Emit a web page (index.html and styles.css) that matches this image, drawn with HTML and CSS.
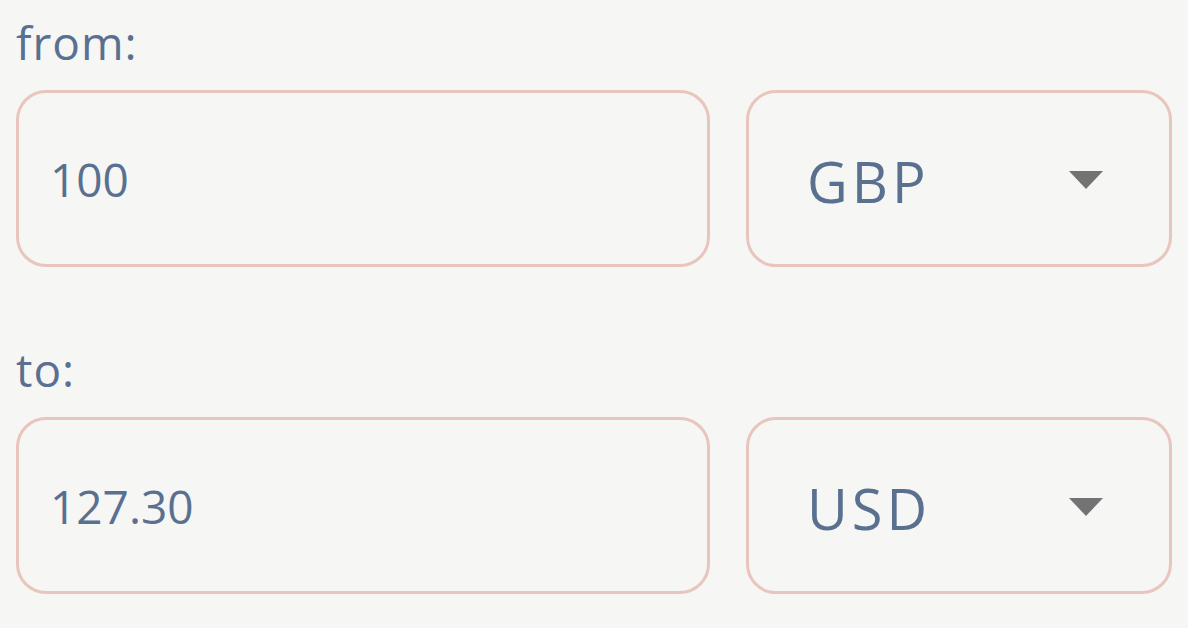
FILE: index.html
```html
<!DOCTYPE html>
<html lang="en">
<head>
<meta charset="utf-8">
<title>Currency converter</title>
<link rel="stylesheet" href="styles.css">
</head>
<body>
<main class="converter">
  <section class="group">
    <label class="label" for="from-amount">from:</label>
    <div class="row">
      <div class="field amount">
        <input id="from-amount" class="amount-input" type="text" value="100">
      </div>
      <div class="field currency">
        <select class="currency-select" aria-label="from currency">
          <option selected>GBP</option>
          <option>USD</option>
          <option>EUR</option>
        </select>
        <svg class="caret" width="34" height="18" viewBox="0 0 34 18" aria-hidden="true"><path d="M0 0 H34 L17 18 Z" fill="#737373"/></svg>
      </div>
    </div>
  </section>
  <section class="group">
    <label class="label" for="to-amount">to:</label>
    <div class="row">
      <div class="field amount">
        <input id="to-amount" class="amount-input" type="text" value="127.30">
      </div>
      <div class="field currency">
        <select class="currency-select" aria-label="to currency">
          <option>GBP</option>
          <option selected>USD</option>
          <option>EUR</option>
        </select>
        <svg class="caret" width="34" height="18" viewBox="0 0 34 18" aria-hidden="true"><path d="M0 0 H34 L17 18 Z" fill="#737373"/></svg>
      </div>
    </div>
  </section>
</main>
</body>
</html>
```

FILE: styles.css
```css
* { box-sizing: border-box; }
html, body {
  margin: 0;
  padding: 0;
  background: #f6f6f4;
}
body {
  font-family: "Open Sans", "DejaVu Sans", sans-serif;
  color: #5a7090;
}
.converter {
  padding: 11px 16px 0 16px;
  display: flex;
  flex-direction: column;
  gap: 71px;
}
.group {
  display: flex;
  flex-direction: column;
  gap: 17px;
}
.label {
  display: block;
  font-size: 46px;
  line-height: 62px;
  letter-spacing: 1px;
  color: #5a7090;
}
.row {
  display: flex;
  gap: 36px;
}
.field {
  height: 177px;
  border: 3px solid #e8c5bd;
  border-radius: 30px;
  display: flex;
  align-items: center;
  background: #f6f6f4;
}
.amount {
  width: 694px;
  padding-left: 31px;
}
.currency {
  width: 426px;
  padding-left: 58px;
  padding-right: 66px;
}
.amount-input {
  border: 0;
  outline: 0;
  background: transparent;
  font-family: inherit;
  font-size: 46px;
  color: #5a7090;
  width: 100%;
  padding: 0;
}
.currency-select {
  appearance: none;
  -webkit-appearance: none;
  border: 0;
  outline: 0;
  background: transparent;
  font-family: inherit;
  font-size: 56px;
  letter-spacing: 4px;
  color: #5a7090;
  flex: 1;
  padding: 0;
  margin-top: 4px;
}
.caret {
  display: block;
  flex: none;
  margin-top: 2px;
}
```
